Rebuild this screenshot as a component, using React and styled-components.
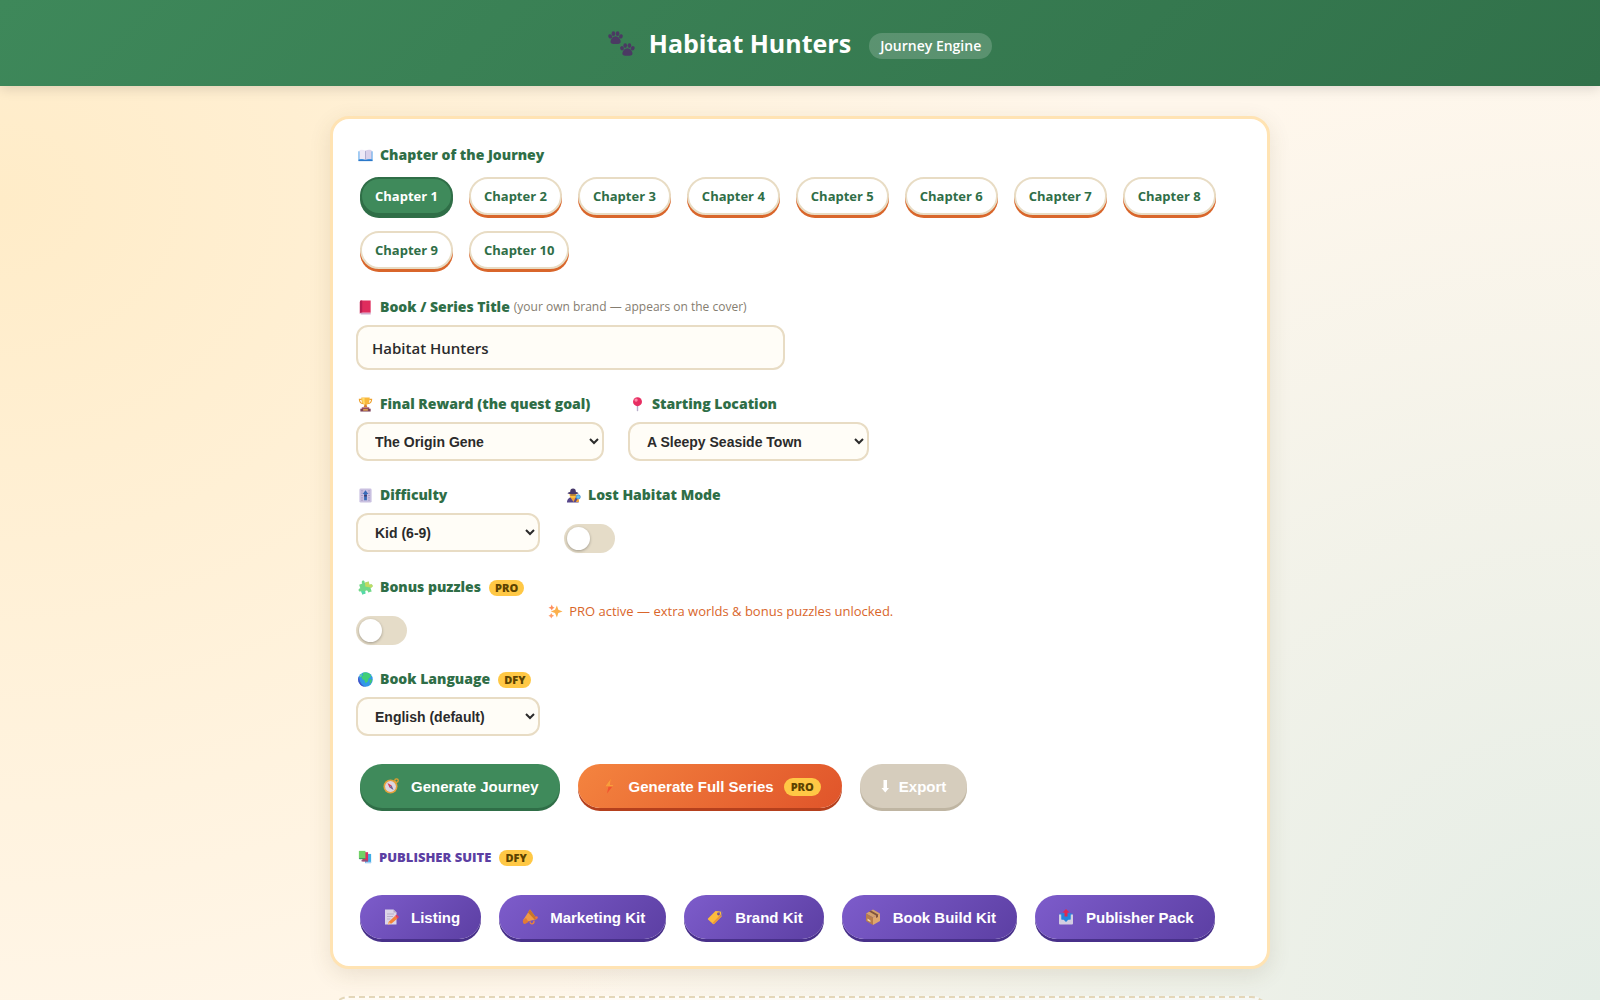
import React, { useState } from "react";
import styled, { createGlobalStyle, css } from "styled-components";

const ui = `"Open Sans", "Noto Sans", sans-serif`;
const control = `"Liberation Sans", Arial, sans-serif`;

const GlobalStyle = createGlobalStyle`
  *, *::before, *::after { box-sizing: border-box; }
  html { min-height: 100%; }
  body {
    margin: 0;
    min-height: 100vh;
    font-family: ${ui};
    color: #2b2b2b;
    background:
      radial-gradient(70% 95% at 0% 20%, #ffecc8, transparent) fixed,
      radial-gradient(65% 95% at 100% 100%, #e4ede6, transparent) fixed,
      #fff7ec;
  }
`;

const Header = styled.header`
  display: flex;
  align-items: center;
  justify-content: center;
  gap: 14px;
  height: 86px;
  padding: 0 24px;
  color: #fff;
  background: linear-gradient(135deg, #3e885a, #31714a);
  box-shadow: 0 3px 12px rgba(0, 0, 0, 0.13);
`;

const Title = styled.h1`
  margin: 0 4px 0 0;
  font-size: 25px;
  line-height: 36px;
  font-weight: 700;
`;

const Tag = styled.span`
  margin-top: 6px;
  padding: 0 11px;
  border-radius: 13px;
  font-size: 14px;
  line-height: 26px;
  font-weight: 600;
  background: rgba(255, 255, 255, 0.18);
`;

const Main = styled.main`
  display: flex;
  flex-direction: column;
  gap: 27px;
  max-width: 988px;
  margin: 0 auto;
  padding: 30px 24px;
`;

const Card = styled.section`
  display: flex;
  flex-direction: column;
  gap: 24px;
  padding: 26px 23px 23px;
  border: 3px solid #ffe3b3;
  border-radius: 19px;
  background: #fff;
  box-shadow: 0 6px 22px rgba(90, 70, 30, 0.12);
`;

const Placeholder = styled.section`
  min-height: 200px;
  border: 2px dashed #e3d6b8;
  border-radius: 19px;
  background: rgba(255, 255, 255, 0.5);
`;

const Row = styled.div`
  display: flex;
  flex-wrap: wrap;
  align-items: ${(p) => p.$align || "flex-start"};
  gap: 24px;
`;

const Field = styled.div`
  display: flex;
  flex-direction: column;
  align-items: flex-start;
  gap: ${(p) => (p.$toggle ? 19 : 8)}px;
`;

const labelText = css`
  display: flex;
  align-items: center;
  gap: 7px;
  margin: 0;
  padding-left: 2px;
  font-size: 14px;
  line-height: 20px;
  font-weight: 800;
  color: #2f6e47;
`;

const Label = styled.label`
  ${labelText}
`;

const GroupLabel = styled.div`
  ${labelText}
`;

const Hint = styled.span`
  margin-left: -3px;
  font-size: 12px;
  font-weight: 400;
  color: #857d70;
`;

const Badge = styled.span`
  margin: 2px 0 0 1px;
  padding: 0 6px;
  border-radius: 8px;
  font-family: ${ui};
  font-size: 11px;
  line-height: 16px;
  font-weight: 800;
  color: #5c4300;
  background: #ffc845;
`;

const Chapters = styled.div`
  display: flex;
  flex-wrap: wrap;
  gap: 16px;
  padding: 4px;
`;

const Chapter = styled.button`
  height: 38px;
  padding: 0 13px;
  border: 2px solid ${(p) => (p.$active ? "#2f6e47" : "#e8dcc4")};
  border-radius: 19px;
  font-family: ${ui};
  font-size: 13px;
  font-weight: 700;
  color: ${(p) => (p.$active ? "#fff" : "#2f6e47")};
  background: ${(p) => (p.$active ? "#3f8a5b" : "#fff")};
  box-shadow: 0 3px 0 ${(p) => (p.$active ? "#2f6e47" : "#d9662b")};
  cursor: pointer;
`;

const field = css`
  border: 2px solid #e8dcc4;
  border-radius: 12px;
  color: #2b2b2b;
  background-color: #fffdf7;
`;

const TextInput = styled.input`
  ${field}
  width: 429px;
  max-width: 100%;
  height: 45px;
  padding: 0 14px;
  font-family: ${ui};
  font-size: 15px;
  font-weight: 600;
`;

const Select = styled.select`
  ${field}
  width: ${(p) => p.$width}px;
  max-width: 100%;
  height: 39px;
  padding: 0 0 0 13px;
  font-family: ${control};
  font-size: 14px;
  font-weight: 700;
`;

const Toggle = styled.input`
  appearance: none;
  width: 51px;
  height: 29px;
  margin: 0;
  padding: 3px;
  border-radius: 15px;
  background: #e5dcc8;
  cursor: pointer;

  &::before {
    content: "";
    display: block;
    width: 23px;
    height: 23px;
    border-radius: 50%;
    background: #fff;
    box-shadow: 0 1px 3px rgba(0, 0, 0, 0.3);
  }
  &:checked { background: #3f8a5b; }
  &:checked::before { margin-left: auto; }
`;

const Notice = styled.p`
  display: flex;
  align-items: center;
  gap: 6px;
  margin: 0;
  font-size: 13px;
  line-height: 20px;
  font-weight: 500;
  color: #d9662b;
`;

const Actions = styled.div`
  display: flex;
  flex-wrap: wrap;
  gap: 18px;
  padding: 4px;
`;

const tones = {
  green: ["#3f8a5b", "#2f6e47"],
  orange: ["linear-gradient(135deg, #f4843f, #e0542a)", "#b5401d"],
  muted: ["#d6cdbd", "#bfb5a2"],
  purple: ["linear-gradient(135deg, #7d5ccb, #5c3fa3)", "#48308a"],
};

const Action = styled.button`
  display: flex;
  align-items: center;
  gap: 10px;
  height: 44px;
  padding: 0 21px;
  border: 0;
  border-radius: 22px;
  font-family: ${control};
  font-size: 15px;
  font-weight: 700;
  color: #fff;
  background: ${(p) => tones[p.$tone][0]};
  box-shadow: 0 3px 0 ${(p) => tones[p.$tone][1]};
  cursor: ${(p) => (p.disabled ? "not-allowed" : "pointer")};

  ${Badge} {
    margin-left: 0;
    padding: 0 7px;
    line-height: 18px;
    border-radius: 9px;
  }
`;

const IconSlot = styled.span`
  display: flex;
  justify-content: center;
  width: ${(p) => p.$width || 20}px;
`;

const SuiteTitle = styled.h2`
  ${labelText}
  margin-top: 11px;
  font-size: 13px;
  color: #5c3fa3;
`;

const Drawing = styled.svg`
  flex: none;
`;

const drawings = {
  paws: (
    <g fill="#4b3a63">
      {[[0, 1], [14, 15]].map(([x, y]) => (
        <g key={x} transform={`translate(${x} ${y})`}>
          <ellipse cx="2.6" cy="6.6" rx="2.2" ry="2.6" transform="rotate(-20 2.6 6.6)" />
          <ellipse cx="6.4" cy="3.4" rx="2.2" ry="2.8" />
          <ellipse cx="11.4" cy="3.4" rx="2.2" ry="2.8" />
          <ellipse cx="15.3" cy="6.6" rx="2.2" ry="2.6" transform="rotate(20 15.3 6.6)" />
          <path d="M9 6.500c3.400 0 6 3.600 6 6.300 0 2-1.500 2.700-6 2.700s-6-.7-6-2.700C3 10.100 5.600 6.500 9 6.500z" />
        </g>
      ))}
    </g>
  ),
  book: (
    <>
      <path d="M1 7h30v20H1z" fill="#4a9fe8" />
      <path d="M1 25h30v3H1z" fill="#2b78c9" />
      <path d="M3 5c5-2 10-1 13 1v19c-4-2-8-2-13-1z" fill="#eee9f6" />
      <path d="M29 5c-5-2-10-1-13 1v19c4-2 8-2 13-1z" fill="#d9d1ea" />
      <path d="M16 6v19" stroke="#aaa0c4" strokeWidth="1.500" />
    </>
  ),
  redBook: (
    <>
      <path d="M4 4q0-3 3-3h20v26H7q-3 0-3 3z" fill="#df2c5d" />
      <path d="M4 4q0-3 3-3h2v26H7q-3 0-3 2z" fill="#b71f52" />
      <path d="M5 27h22v4H7q-2 0-2-2z" fill="#cfa7c9" />
    </>
  ),
  trophy: (
    <>
      <path d="M8 5H3c0 7 3 9 8 9M24 5h5c0 7-3 9-8 9" fill="none" stroke="#eea22f" strokeWidth="2.500" />
      <path d="M7 1h18c0 10-3 16-9 16S7 11 7 1z" fill="#f9b83c" />
      <path d="M9 2h5c0 7 0 11 2 15-5-1-7-7-7-15z" fill="#ffdc6a" />
      <path d="M14 16h4l2 6h-8z" fill="#d9822c" />
      <path d="M8 22h16v4H8z" fill="#a45662" />
      <path d="M5 25h22v6H5z" fill="#7c3f56" />
      <path d="M11 26h10v3H11z" fill="#f0b34a" />
    </>
  ),
  pin: (
    <>
      <path d="M14.500 16h3v13l-1.500 2-1.500-2z" fill="#b9aecb" />
      <circle cx="16" cy="10" r="9.500" fill="#e72e62" />
      <circle cx="13" cy="6.500" r="3.500" fill="#ff86a6" />
    </>
  ),
  slider: (
    <>
      <rect x="3" y="1" width="26" height="30" rx="3" fill="#c9c0e0" />
      <path d="M7 6h3M7 11h3M7 16h3M7 21h3M7 26h3M22 6h3M22 11h3M22 16h3M22 21h3M22 26h3" stroke="#8d82b0" strokeWidth="1.500" />
      <path d="M16 5l6 8h-3v13h-6V13h-3z" fill="#3a6cb8" />
      <path d="M13 15h6v3h-6z" fill="#433b6b" />
    </>
  ),
  detective: (
    <>
      <path d="M2 31c0-8 5-12 13-12s12 4 12 12z" fill="#57468a" />
      <path d="M9 19h12l-5 11z" fill="#f0a43a" />
      <circle cx="15" cy="14" r="7.500" fill="#ffc23d" />
      <path d="M3 11c3-2 5-2 6-3 0-5 2-7 6-7s6 2 6 7c1 1 3 1 6 3-5 3-19 3-24 0z" fill="#47396b" />
      <path d="M9 14h12v2H9z" fill="#7b4d34" />
      <circle cx="26" cy="19" r="4.500" fill="#65c4f3" stroke="#2b7fc4" strokeWidth="1.500" />
      <path d="M24 24l-3 6h6l1-6z" fill="#f5a332" />
    </>
  ),
  puzzle: (
    <g transform="rotate(-18 16 16)">
      <path d="M5 6h7c-2-7 7-8 6-1l-1 1h9v8c6-4 8 7 1 6l-1-1v9h-8c2-7-8-7-6 0H5v-8c-6 3-7-7 0-6z" fill="#71d888" />
      <path d="M18 6h8v8c6-4 8 7 1 6l-1-1-10-5z" fill="#c2da61" />
      <path d="M5 19v9h7l1-4z" fill="#54d8ab" />
    </g>
  ),
  sparkles: (
    <>
      <path d="M19 3l3 9 9 4-9 3-3 10-4-10-9-3 9-4z" fill="#fbb04c" />
      <path d="M8 1l2 5 4 2-4 2-2 4-2-4-5-2 5-2z" fill="#ff8d5c" />
      <path d="M7 19l2 4 4 2-4 2-2 4-2-4-4-2 4-2z" fill="#ff9f6c" />
    </>
  ),
  globe: (
    <>
      <circle cx="16" cy="16" r="15.500" fill="#3298e8" />
      <path d="M2 9A15.500 15.500 0 0 0 17 31.500C8 29 3 21 2 9z" fill="#4354c9" />
      <path d="M10 2c6-2 12-1 16 3l2 5-5 4-2 6-5 4-2-6-5-3-2-5 4-3z" fill="#3fcf77" />
      <path d="M25 17l5-2c0 6-2 9-5 11z" fill="#44c96c" />
      <path d="M3 9l4-5 2 2-3 5z" fill="#5edc92" />
    </>
  ),
  compass: (
    <>
      <circle cx="27" cy="5" r="3.500" fill="none" stroke="#e8a02c" strokeWidth="2.500" />
      <circle cx="15" cy="17" r="14" fill="#e5a23c" />
      <circle cx="15" cy="17" r="10.800" fill="#ddd6e2" />
      <path d="M9 10l8.500 5-4.500 4z" fill="#d83b58" />
      <path d="M21 24l-8-5 4.500-4z" fill="#6c6392" />
    </>
  ),
  bolt: (
    <>
      <path d="M20 1L8 17h7l-3 14 13-17h-7z" fill="#f2542f" />
      <path d="M20 1L8 17h15l2-3h-7z" fill="#f89e3c" />
    </>
  ),
  download: <path d="M13 4h7v16h4l-7.500 9L9 20h4z" fill="#fff" />,
  books: (
    <>
      <path d="M16 9h14v21H16z" fill="#3eaee8" />
      <path d="M17 27h13v3H17z" fill="#a9cdf2" />
      <path d="M10 5h13v21H10z" fill="#df2e62" />
      <path d="M8 23h14v3H8z" fill="#8d547e" />
      <path d="M2 2h15v17H2z" fill="#72d267" />
      <path d="M2 18h15v3H4q-2 0-2-3z" fill="#489865" />
    </>
  ),
  memo: (
    <>
      <path d="M4 1h17l6 6v24H4z" fill="#dcd5e8" />
      <path d="M21 1l6 6h-6z" fill="#b5aac6" />
      <path d="M8 10h14M8 15h12M8 20h7" stroke="#b0a6c2" strokeWidth="1.600" />
      <path d="M11 26l13-12 5 5-12 10-7 2z" fill="#f58238" />
      <path d="M24 14l3-3 5 5-3 3z" fill="#e8405b" />
      <path d="M11 26l-1 5 7-2z" fill="#f7c88d" />
    </>
  ),
  megaphone: (
    <>
      <path d="M16 1l14 19-26 7-1-6z" fill="#f09a45" />
      <path d="M16 1l14 19-5 1L12 7z" fill="#c97528" />
      <path d="M2 22l6-4 5 8-7 4c-4 0-5-4-4-8z" fill="#e37b35" />
      <path d="M16 25c0 7 9 6 8-2" fill="none" stroke="#ef8436" strokeWidth="2.600" />
      <circle cx="29" cy="17" r="2.500" fill="#ef7044" />
    </>
  ),
  tag: (
    <>
      <path d="M2 19L17 4l11 1 1 10-15 15q-2 1-3-1l-9-8q-1-1 0-2z" fill="#fcbc3d" />
      <path d="M14 30L29 15l-1-5-17 18z" fill="#ec9635" />
      <circle cx="23" cy="10" r="2.800" fill="#6d4b9d" />
      <path d="M23 9c4-8 10-4 7 1l-4 5" fill="none" stroke="#8577ad" strokeWidth="1.500" />
    </>
  ),
  package: (
    <>
      <path d="M2 9l14-8 14 8-14 8z" fill="#d5a16b" />
      <path d="M2 9l14 8v15L2 24z" fill="#b87c4b" />
      <path d="M30 9l-14 8v15l14-8z" fill="#dfa66d" />
      <path d="M8 5l14 8v5l4-2v-5L12 3z" fill="#80533d" />
      <path d="M5 19l6 4v3l-6-3z" fill="#ecd3b0" />
    </>
  ),
  outbox: (
    <>
      <path d="M3 9h26v14H3z" fill="#2887df" />
      <path d="M2 11h5v10h18V11h5v18q0 2-2 2H4q-2 0-2-2z" fill="#d3cee1" />
      <path d="M7 9h18v12h-4l-5 5-5-5H7z" fill="#2485dd" />
      <path d="M16 0l7 7h-4v8h-6V7H9z" fill="#df294f" />
    </>
  ),
};

function Icon({ name, size = 15 }) {
  return (
    <Drawing width={size} height={size} viewBox="0 0 32 32" aria-hidden="true">
      {drawings[name]}
    </Drawing>
  );
}

function ActionButton({ icon, tone, slot, badge, children, ...rest }) {
  return (
    <Action type="button" $tone={tone} {...rest}>
      <IconSlot $width={slot}>
        <Icon name={icon} size={16} />
      </IconSlot>
      {children}
      {badge && <Badge>{badge}</Badge>}
    </Action>
  );
}

function SelectField({ id, icon, label, badge, width, options }) {
  return (
    <Field>
      <Label htmlFor={id}>
        <Icon name={icon} />
        {label}
        {badge && <Badge>{badge}</Badge>}
      </Label>
      <Select id={id} $width={width}>
        {options.map((o) => (
          <option key={o}>{o}</option>
        ))}
      </Select>
    </Field>
  );
}

function ToggleField({ id, icon, label, badge }) {
  return (
    <Field $toggle>
      <Label htmlFor={id}>
        <Icon name={icon} />
        {label}
        {badge && <Badge>{badge}</Badge>}
      </Label>
      <Toggle id={id} type="checkbox" role="switch" />
    </Field>
  );
}

const chapters = Array.from({ length: 10 }, (_, i) => i + 1);

const suite = [
  ["memo", "Listing"],
  ["megaphone", "Marketing Kit"],
  ["tag", "Brand Kit"],
  ["package", "Book Build Kit"],
  ["outbox", "Publisher Pack"],
];

export default function App() {
  const [chapter, setChapter] = useState(1);
  const [title, setTitle] = useState("Habitat Hunters");

  return (
    <>
      <GlobalStyle />
      <Header>
        <Icon name="paws" size={27} />
        <Title>Habitat Hunters</Title>
        <Tag>Journey Engine</Tag>
      </Header>
      <Main>
        <Card>
          <Field role="group" aria-labelledby="chapter-label">
            <GroupLabel id="chapter-label">
              <Icon name="book" />
              Chapter of the Journey
            </GroupLabel>
            <Chapters>
              {chapters.map((n) => (
                <Chapter
                  key={n}
                  type="button"
                  $active={n === chapter}
                  aria-pressed={n === chapter}
                  onClick={() => setChapter(n)}
                >
                  Chapter {n}
                </Chapter>
              ))}
            </Chapters>
          </Field>

          <Field>
            <Label htmlFor="title">
              <Icon name="redBook" />
              Book / Series Title
              <Hint>(your own brand — appears on the cover)</Hint>
            </Label>
            <TextInput id="title" type="text" value={title} onChange={(e) => setTitle(e.target.value)} />
          </Field>

          <Row>
            <SelectField id="reward" icon="trophy" label="Final Reward (the quest goal)" width={248} options={["The Origin Gene"]} />
            <SelectField id="location" icon="pin" label="Starting Location" width={241} options={["A Sleepy Seaside Town"]} />
          </Row>

          <Row>
            <SelectField id="difficulty" icon="slider" label="Difficulty" width={184} options={["Kid (6-9)"]} />
            <ToggleField id="lost" icon="detective" label="Lost Habitat Mode" />
          </Row>

          <Row $align="center">
            <ToggleField id="bonus" icon="puzzle" label="Bonus puzzles" badge="PRO" />
            <Notice>
              <Icon name="sparkles" />
              PRO active — extra worlds &amp; bonus puzzles unlocked.
            </Notice>
          </Row>

          <SelectField id="language" icon="globe" label="Book Language" badge="DFY" width={184} options={["English (default)"]} />

          <Actions>
            <ActionButton icon="compass" tone="green">Generate Journey</ActionButton>
            <ActionButton icon="bolt" tone="orange" badge="PRO">Generate Full Series</ActionButton>
            <ActionButton icon="download" tone="muted" slot={8} disabled>Export</ActionButton>
          </Actions>

          <SuiteTitle>
            <Icon name="books" size={14} />
            PUBLISHER SUITE
            <Badge>DFY</Badge>
          </SuiteTitle>

          <Actions>
            {suite.map(([icon, name]) => (
              <ActionButton key={name} icon={icon} tone="purple">{name}</ActionButton>
            ))}
          </Actions>
        </Card>
        <Placeholder />
      </Main>
    </>
  );
}
